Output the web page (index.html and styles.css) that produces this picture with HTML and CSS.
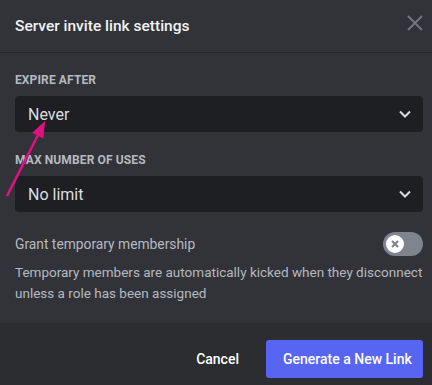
FILE: index.html
```html
<!DOCTYPE html>
<html lang="en">
<head>
<meta charset="utf-8">
<title>Server invite link settings</title>
<link rel="stylesheet" href="styles.css">
</head>
<body>
<div class="modal">
  <header class="modal-header">
    <h1 class="modal-title">Server invite link settings</h1>
    <button class="close-btn" aria-label="Close">
      <svg width="16" height="16" viewBox="0 0 16 16"><path d="M1 1L15 15M15 1L1 15" stroke="currentColor" stroke-width="2" fill="none"/></svg>
    </button>
  </header>
  <main class="modal-body">
    <div class="field">
      <label class="field-label">Expire After</label>
      <div class="select">
        <span class="select-value">Never</span>
        <svg class="chevron" width="12" height="8" viewBox="0 0 12 8"><path d="M1 1.5L6 6.5L11 1.5" stroke="currentColor" stroke-width="2" fill="none"/></svg>
      </div>
    </div>
    <div class="field">
      <label class="field-label">Max Number of Uses</label>
      <div class="select">
        <span class="select-value">No limit</span>
        <svg class="chevron" width="12" height="8" viewBox="0 0 12 8"><path d="M1 1.5L6 6.5L11 1.5" stroke="currentColor" stroke-width="2" fill="none"/></svg>
      </div>
    </div>
    <div class="toggle-row">
      <span class="toggle-label">Grant temporary membership</span>
      <div class="toggle">
        <span class="knob">
          <svg width="10" height="10" viewBox="0 0 10 10"><path d="M2 2L8 8M8 2L2 8" stroke="currentColor" stroke-width="2.2" fill="none"/></svg>
        </span>
      </div>
    </div>
    <p class="description">Temporary members are automatically kicked when they disconnect unless a role has been assigned</p>
  </main>
  <footer class="modal-footer">
    <button class="btn-cancel">Cancel</button>
    <button class="btn-primary">Generate a New Link</button>
  </footer>
  <svg class="annotation" width="432" height="385" viewBox="0 0 432 385">
    <line x1="7" y1="196" x2="38" y2="135" stroke="#e0117f" stroke-width="2.6"/>
    <polygon points="45,121 43.4,138.5 32.2,132.8" fill="#e0117f"/>
  </svg>
</div>
</body>
</html>
```

FILE: styles.css
```css
* { box-sizing: border-box; }
html, body {
  margin: 0;
  padding: 0;
  width: 432px;
  height: 385px;
  overflow: hidden;
  background: #313338;
  font-family: Roboto, "Noto Sans", sans-serif;
}
.modal {
  position: relative;
  width: 432px;
  height: 385px;
  display: flex;
  flex-direction: column;
  background: #313338;
}
.modal-header {
  height: 53px;
  flex: none;
  display: flex;
  align-items: center;
  justify-content: space-between;
  padding: 0 9px 0 15px;
  border-bottom: 1px solid #26272b;
}
.modal-title {
  margin: 0;
  font-size: 15.5px;
  font-weight: 500;
  color: #f2f3f5;
  line-height: 20px;
  margin-top: -1px;
}
.close-btn {
  background: none;
  border: 0;
  padding: 0;
  width: 16px;
  height: 16px;
  color: #72757d;
  display: flex;
  margin-top: -6px;
}
.modal-body {
  flex: 1;
  padding: 19px 9px 0 15px;
}
.field { margin-bottom: 20px; }
.field-label {
  display: block;
  font-size: 12px;
  line-height: 16px;
  font-weight: 700;
  color: #b5bac1;
  text-transform: uppercase;
  letter-spacing: 0.01em;
  margin-bottom: 8px;
}
.select {
  height: 36px;
  background: #1e1f22;
  border-radius: 4px;
  display: flex;
  align-items: center;
  justify-content: space-between;
  padding: 0 12px 0 13px;
}
.select-value {
  font-size: 16px;
  color: #dbdee1;
}
.chevron { color: #dbdee1; }
.toggle-row {
  height: 24px;
  display: flex;
  align-items: center;
  justify-content: space-between;
}
.toggle-label {
  font-size: 13.8px;
  color: #b5bac1;
}
.toggle {
  width: 40px;
  height: 24px;
  border-radius: 12px;
  background: #80848e;
  padding: 3px;
  display: flex;
}
.knob {
  width: 18px;
  height: 18px;
  border-radius: 50%;
  background: #ffffff;
  color: #80848e;
  display: flex;
  align-items: center;
  justify-content: center;
}
.description {
  margin: 6px 0 0;
  font-size: 13.5px;
  line-height: 21px;
  color: #b5bac1;
}
.modal-footer {
  height: 62px;
  flex: none;
  background: #2b2d31;
  display: flex;
  justify-content: flex-end;
  align-items: flex-start;
  padding: 17px 9px 0 0;
  gap: 11px;
}
.btn-cancel, .btn-primary {
  height: 38px;
  border: 0;
  font-family: inherit;
  font-size: 14px;
  font-weight: 500;
  color: #ffffff;
  border-radius: 3px;
  white-space: nowrap;
}
.btn-cancel {
  background: transparent;
  padding: 0 16px;
}
.btn-primary {
  background: #5865f2;
  padding: 0 17px;
  width: 157px;
}
.annotation {
  position: absolute;
  left: 0;
  top: 0;
  pointer-events: none;
}
```
